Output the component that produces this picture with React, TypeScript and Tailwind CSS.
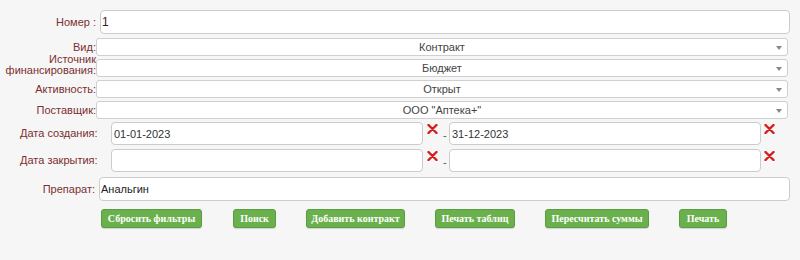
import React from "react";

const LABEL = "text-[11px] text-[#7b2f2f] leading-[11px] whitespace-nowrap";

function Cross() {
  return (
    <svg width="11" height="10" viewBox="0 0 11 10">
      <path d="M1.5 1 L9.5 9 M9.5 1 L1.5 9" stroke="#d71a1a" strokeWidth="2.4" strokeLinecap="round" />
    </svg>
  );
}

function Select({ value }: { value: string }) {
  return (
    <div className="relative flex h-[18px] w-[692px] items-center justify-center rounded-[3px] border border-[#cfcfcf] bg-white text-[11px] leading-[14px] text-[#444]">
      {value}
      <span className="absolute right-[5px] top-[7px] h-0 w-0 border-x-[3px] border-t-[4px] border-x-transparent border-t-[#888]" />
    </div>
  );
}

function Btn({ children, w }: { children: React.ReactNode; w: string }) {
  return (
    <button
      className={`${w} h-[19px] rounded-[3px] border border-[#5c9c43] bg-[#6ab04c] text-[10px] leading-[12px] font-bold text-white shadow-[0_1px_1px_rgba(0,0,0,0.15)]`}
      style={{ fontFamily: "'Liberation Serif', serif" }}
    >
      {children}
    </button>
  );
}

const SELECTS = [
  { label: "Вид:", value: "Контракт", h: "h-[18px]" },
  { label: "Источник финансирования:", value: "Бюджет", h: "h-[18px]" },
  { label: "Активность:", value: "Открыт", h: "h-[18px]" },
  { label: "Поставщик:", value: "ООО \"Аптека+\"", h: "h-[18px]" },
];

export default function App() {
  return (
    <div
      className="h-[260px] w-[800px] overflow-hidden bg-[#f6f6f6]"
      style={{ fontFamily: "'Liberation Sans', Arial, sans-serif" }}
    >
      <div className="flex h-[24px] items-center mt-[10px]">
        <div className={`${LABEL} w-[96px] text-right`}>Номер :</div>
        <div className="ml-[4px] flex h-[24px] w-[690px] items-center rounded-[4px] border border-[#cccccc] bg-white px-[1px] text-[12px] leading-[14px] text-[#3a1a1a]">
          1
        </div>
      </div>

      <div className="mt-[4px] flex flex-col gap-[3px]">
        {SELECTS.map((s, i) => (
          <div key={i} className="flex h-[18px] items-end">
            <div className={`${LABEL} w-[96px] pb-[3px] text-right`}>
              {s.label === "Источник финансирования:" ? (
                <div className="-mb-[2px] leading-[11px]">
                  Источник
                  <br />
                  финансирования:
                </div>
              ) : (
                s.label
              )}
            </div>
            <Select value={s.value} />
          </div>
        ))}
      </div>

      <div className="mt-[3px] flex flex-col gap-[4px]">
        {[
          { label: "Дата создания:", a: "01-01-2023", b: "31-12-2023" },
          { label: "Дата закрытия:", a: "", b: "" },
        ].map((r, i) => (
          <div key={i} className="flex h-[23px] items-start">
            <div className={`${LABEL} w-[111px] pl-[20px] pt-[6px]`}>{r.label}</div>
            <div className="flex h-[23px] w-[312px] items-center rounded-[4px] border border-[#cccccc] bg-white px-[2px] text-[11px] leading-[14px] text-[#333]">
              {r.a}
            </div>
            <div className="ml-[4px] mt-[2px] h-[10px] w-[11px]">
              <Cross />
            </div>
            <div className="ml-[5px] mt-[7px] h-[12px] w-[3px] text-[11px] leading-[12px] text-[#555]">-</div>
            <div className="ml-[3px] flex h-[23px] w-[312px] items-center rounded-[4px] border border-[#cccccc] bg-white px-[2px] text-[11px] leading-[14px] text-[#333]">
              {r.b}
            </div>
            <div className="ml-[3px] mt-[2px] h-[10px] w-[11px]">
              <Cross />
            </div>
          </div>
        ))}
      </div>

      <div className="mt-[5px] flex h-[24px] items-center">
        <div className={`${LABEL} w-[95px] text-right`}>Препарат:</div>
        <div className="ml-[4px] flex h-[24px] w-[691px] items-center rounded-[4px] border border-[#cccccc] bg-white px-[1px] text-[11px] leading-[14px] text-[#222]">
          Анальгин
        </div>
      </div>

      <div className="ml-[101px] mt-[8px] flex items-center">
        <Btn w="w-[101px]">Сбросить фильтры</Btn>
        <div className="ml-[31px] flex"><Btn w="w-[43px]">Поиск</Btn></div>
        <div className="ml-[30px] flex"><Btn w="w-[99px]">Добавить контракт</Btn></div>
        <div className="ml-[30px] flex"><Btn w="w-[80px]">Печать таблиц</Btn></div>
        <div className="ml-[30px] flex"><Btn w="w-[104px]">Пересчитать суммы</Btn></div>
        <div className="ml-[30px] flex"><Btn w="w-[48px]">Печать</Btn></div>
      </div>
    </div>
  );
}
